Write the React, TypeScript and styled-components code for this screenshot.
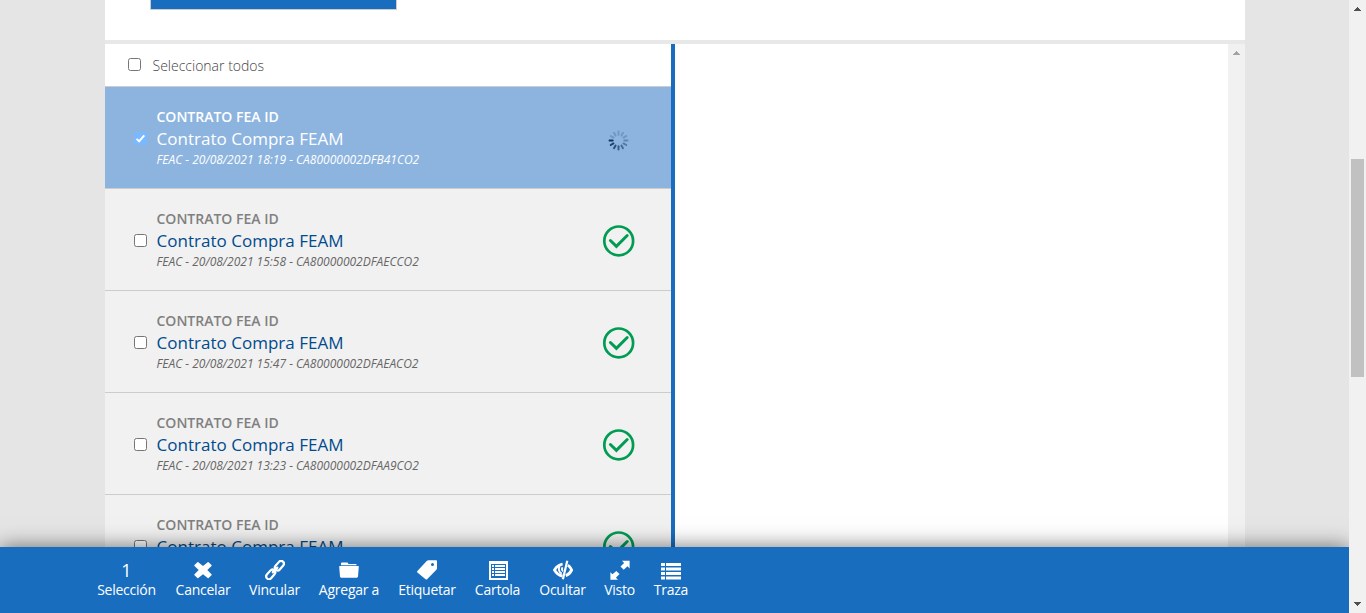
import React from "react";
import styled, { createGlobalStyle } from "styled-components";

const GlobalStyle = createGlobalStyle`
  * { box-sizing: border-box; }
  html, body { margin: 0; padding: 0; overflow: hidden; }
  body { font-family: "Open Sans", "Liberation Sans", sans-serif; }
`;

const Window = styled.div`
  display: grid;
  grid-template-columns: 1fr 17px;
  height: 613px;
  overflow: hidden;
`;

const Page = styled.div`
  display: flex;
  flex-direction: column;
  min-width: 0;
  height: 613px;
  overflow: hidden;
  background: #e5e5e5;
`;

const Content = styled.main`
  display: flex;
  flex-direction: column;
  width: 1140px;
  height: 547px;
  margin-left: 105px;
  overflow: hidden;
`;

const TopPanel = styled.section`
  height: 44px;
  flex: none;
  padding-left: 45px;
  background: #fff;
  border-bottom: 4px solid #e8e8e8;
`;

const SearchButton = styled.div`
  width: 247px;
  height: 10px;
  background: #196dbe;
  border: 1px solid #ccc;
  border-top: 0;
`;

const Split = styled.section`
  display: grid;
  grid-template-columns: 566px 4px 1fr 17px;
  flex: 1;
  min-height: 0;
`;

const List = styled.div`
  display: flex;
  flex-direction: column;
  overflow: hidden;
  background: #f1f1f1;
`;

const Divider = styled.div`
  background: #196dbe;
`;

const Preview = styled.div`
  background: #fff;
`;

const SelectAll = styled.div`
  display: flex;
  flex: none;
  height: 43px;
  padding: 0 0 2px 23px;
  align-items: center;
  gap: 11.5px;
  background: #fff;
  border-bottom: 1px solid #ccc;
  color: #444;
  font-size: 14px;
  font-weight: 300;
  line-height: 20px;
`;

const SelectAllText = styled.span`
  padding-top: 3px;
`;

const Check = styled.span<{ $on?: boolean }>`
  display: flex;
  flex: none;
  width: 13px;
  height: 13px;
  border: 1px solid ${(p) => (p.$on ? "#7ab8ff" : "#767676")};
  border-radius: ${(p) => (p.$on ? "1px" : "2.5px")};
  background: ${(p) => (p.$on ? "#7ab8ff" : "#fff")};
`;

const Row = styled.article<{ $selected?: boolean }>`
  display: flex;
  flex: none;
  height: 102px;
  padding: 19px 36px 0 29px;
  background: ${(p) => (p.$selected ? "#8cb4df" : "#f1f1f1")};
  border-bottom: 1px solid #ccc;
  color: ${(p) => (p.$selected ? "#fff" : "#666")};
`;

const RowCheck = styled.div`
  width: 22.5px;
  padding-top: 26px;
`;

const RowText = styled.div`
  flex: 1;
  white-space: nowrap;
`;

const Kind = styled.div<{ $selected?: boolean }>`
  color: ${(p) => (p.$selected ? "#fff" : "#808080")};
  font-size: 14px;
  font-weight: 600;
  line-height: 22px;
`;

const Title = styled.div<{ $selected?: boolean }>`
  color: ${(p) => (p.$selected ? "#fff" : "#004b8d")};
  font-size: 17px;
  line-height: 22px;
  letter-spacing: 0.02px;
`;

const Meta = styled.div`
  font-size: 12px;
  font-style: italic;
  line-height: 20px;
`;

const Status = styled.div<{ $busy?: boolean }>`
  display: flex;
  width: 33px;
  height: 33px;
  margin-top: ${(p) => (p.$busy ? 18 : 16)}px;
  align-items: center;
  justify-content: center;
`;

const Track = styled.div<{ $disabled?: boolean }>`
  display: flex;
  flex-direction: column;
  align-items: center;
  background: #f1f1f1;
  color: ${(p) => (p.$disabled ? "#a3a3a3" : "#505050")};
`;

const Arrow = styled.span<{ $raised?: boolean }>`
  display: flex;
  flex: none;
  height: 17px;
  padding-bottom: ${(p) => (p.$raised ? 2 : 0)}px;
  align-items: center;
`;

const Thumb = styled.div`
  width: 13px;
  height: 218px;
  margin: 142px 0 auto;
  background: #c1c1c1;
`;

const Toolbar = styled.nav`
  display: flex;
  flex: none;
  z-index: 1;
  height: 66px;
  padding: 11px 0 0 87px;
  background: #196dbe;
  box-shadow: 0 0 20px rgba(0, 0, 0, 0.55);
  color: #fff;
`;

const Tool = styled.div<{ $width: number }>`
  display: flex;
  flex: none;
  flex-direction: column;
  align-items: center;
  width: ${(p) => p.$width}px;
`;

const ToolIcon = styled.span`
  display: flex;
  height: 24px;
  align-items: center;
  justify-content: center;
  font-size: 18px;
  line-height: 24px;
`;

const ToolLabel = styled.span`
  font-size: 14px;
  line-height: 16px;
  letter-spacing: -0.25px;
  white-space: nowrap;
`;

const Caret = ({ down }: { down?: boolean }) => (
  <svg width="7" height="4" viewBox="0 0 7 4" shapeRendering="crispEdges" fill="currentColor">
    <path d={down ? "M0 0h7v1H6v1H5v1H4v1H3V3H2V2H1V1H0z" : "M0 4h7V3H6V2H5V1H4V0H3v1H2v1H1v1H0z"} />
  </svg>
);

const Tick = () => (
  <svg width="11" height="11" viewBox="0 0 11 11" fill="none" stroke="#fff" strokeWidth="2">
    <path d="M1.6 5.9l2.5 2.5 5.2-6.1" />
  </svg>
);

const Done = () => (
  <svg width="33" height="33" viewBox="0 0 33 33" fill="none" stroke="#009c52">
    <circle cx="16.7" cy="16.9" r="14.4" strokeWidth="2.7" />
    <path d="M8.4 16.5l6 5.8L25.2 11.5" strokeWidth="3" strokeLinecap="round" />
  </svg>
);

const spokes = Array.from({ length: 12 }, (_, i) => i);

const Spinner = () => (
  <svg width="23" height="23" viewBox="-11.5 -11.5 23 23" stroke="#0c325f" strokeWidth="1.9" strokeLinecap="round">
    {spokes.map((i) => (
      <line key={i} x1="-5.8" x2="-9" y1="0" y2="0" transform={`rotate(${-i * 30})`} opacity={Math.max(0.22, 1 - i * 0.11)} />
    ))}
  </svg>
);

const iconProps = { width: 20, height: 20, viewBox: "0 0 20 20", fill: "currentColor" };

const Remove = () => (
  <svg {...iconProps}>
    <path d="M4.4 2.2c.3-.3.6-.3.9 0L10 6l4.7-3.800c.3-.3.6-.3.9 0l2.900 2.800c.3.3.3.7 0 1L14.300 10l4.200 4.200c.3.3.3.7 0 1l-2.900 2.800c-.3.3-.6.3-.9 0L10 14.200l-4.700 3.800c-.3.3-.6.3-.9 0l-2.900-2.800c-.3-.3-.3-.7 0-1L5.700 10 1.500 6c-.3-.3-.3-.7 0-1z" />
  </svg>
);

const Link = () => (
  <svg {...iconProps} fill="none" stroke="currentColor" strokeWidth="2.2">
    <rect x="-5.4" y="-2.8" width="10.8" height="5.6" rx="2.8" transform="translate(14.4 5.7) rotate(-49)" />
    <rect x="-5.4" y="-2.8" width="10.8" height="5.6" rx="2.8" transform="translate(5.7 14.4) rotate(-49)" />
    <path d="M8 12.2l4.2-4.4" strokeWidth="2.6" strokeLinecap="round" />
  </svg>
);

const Folder = () => (
  <svg {...iconProps}>
    <path d="M2 5.2V3.7c0-.8.5-1.2 1.2-1.2h4.6c.8 0 1 .3 1.4.9l.4.7h6.8c.8 0 1.3.4 1.3 1.1z" />
    <path d="M.7 6h18.6c.4 0 .6.3.5.7l-.8 9.800c-.1.7-.5 1.200-1.300 1.200H2.300c-.8 0-1.200-.5-1.300-1.200L.2 6.700c0-.4.1-.7.5-.7z" />
  </svg>
);

const Tag = () => (
  <svg {...iconProps}>
    <path fillRule="evenodd" d="M11.6.3h7.6c.5 0 .8.3.8.8v7.2c0 .6-.2 1-.6 1.4l-9.3 9.5c-.5.5-1 .5-1.5 0L.4 12.5c-.5-.5-.5-1 0-1.5L9.7 1.1c.6-.6 1.1-.8 1.900-.8zm3.900 2.600a1.500 1.500 0 1 0 0 3 1.500 1.500 0 0 0 0-3z" />
  </svg>
);

const ListAlt = () => (
  <svg {...iconProps}>
    <path fillRule="evenodd" d="M1 1h19v19H1zM3 4v14h15V4z" />
    <path d="M4 5h2v2H4zM7 5h10v2H7zM4 8h2v2H4zM7 8h10v2H7zM4 11h2v2H4zM7 11h10v2H7zM4 14h2v2H4zM7 14h10v2H7z" />
  </svg>
);

const EyeClosed = () => (
  <svg {...iconProps} fill="none" stroke="currentColor" strokeWidth="2.8">
    <path d="M9.6 4.2C6 4.600 3.400 7 1.500 10c1.800 3.200 4.400 5.600 8 6M14.900 5.200c1.800 1.200 2.900 2.800 3.800 4.800-1.400 2.800-3.400 4.700-5.900 5.700" />
    <path d="M6.800 6C5 8.600 5.800 12.500 8.800 13.600M9.600 7.400C8.400 8.800 8.900 10.600 10.200 11" strokeWidth="1.9" />
    <path d="M14.300.7L9.900 19.300" strokeWidth="2.2" />
  </svg>
);

const Resize = () => (
  <svg {...iconProps}>
    <path d="M12 .8h7.600v7.600l-2.100-2.100-3.800 3.400-3.200-3.200 3.600-3.600zM8 19.800H.4v-7.600l2.100 2.100 3.800-3.400 3.200 3.200-3.600 3.600z" />
  </svg>
);

const ThList = () => (
  <svg {...iconProps}>
    <path d="M0 3h4v3H0zM5 3h15v3H5zM0 7.500h4v3H0zM5 7.500h15v3H5zM0 12h4v3H0zM5 12h15v3H5zM0 16.500h4v3H0zM5 16.500h15v3H5z" />
  </svg>
);

const documents = [
  { meta: "FEAC - 20/08/2021 18:19 - CA80000002DFB41CO2", selected: true },
  { meta: "FEAC - 20/08/2021 15:58 - CA80000002DFAECCO2" },
  { meta: "FEAC - 20/08/2021 15:47 - CA80000002DFAEACO2" },
  { meta: "FEAC - 20/08/2021 13:23 - CA80000002DFAA9CO2" },
  { meta: "" },
];

const tools = [
  { label: "Selección", icon: "1", width: 79 },
  { label: "Cancelar", icon: <Remove />, width: 74 },
  { label: "Vincular", icon: <Link />, width: 69 },
  { label: "Agregar a", icon: <Folder />, width: 80 },
  { label: "Etiquetar", icon: <Tag />, width: 76 },
  { label: "Cartola", icon: <ListAlt />, width: 65 },
  { label: "Ocultar", icon: <EyeClosed />, width: 65 },
  { label: "Visto", icon: <Resize />, width: 49 },
  { label: "Traza", icon: <ThList />, width: 54 },
];

export default function App() {
  return (
    <>
      <GlobalStyle />
      <Window>
        <Page>
          <Content>
            <TopPanel>
              <SearchButton />
            </TopPanel>
            <Split>
              <List>
                <SelectAll>
                  <Check />
                  <SelectAllText>Seleccionar todos</SelectAllText>
                </SelectAll>
                {documents.map((d, i) => (
                  <Row key={i} $selected={d.selected}>
                    <RowCheck>
                      <Check $on={d.selected}>{d.selected && <Tick />}</Check>
                    </RowCheck>
                    <RowText>
                      <Kind $selected={d.selected}>CONTRATO FEA ID</Kind>
                      <Title $selected={d.selected}>Contrato Compra FEAM</Title>
                      {d.meta && <Meta>{d.meta}</Meta>}
                    </RowText>
                    <Status $busy={d.selected}>{d.selected ? <Spinner /> : <Done />}</Status>
                  </Row>
                ))}
              </List>
              <Divider />
              <Preview />
              <Track $disabled>
                <Arrow>
                  <Caret />
                </Arrow>
              </Track>
            </Split>
          </Content>
          <Toolbar>
            {tools.map((t) => (
              <Tool key={t.label} $width={t.width}>
                <ToolIcon>{t.icon}</ToolIcon>
                <ToolLabel>{t.label}</ToolLabel>
              </Tool>
            ))}
          </Toolbar>
        </Page>
        <Track>
          <Arrow>
            <Caret />
          </Arrow>
          <Thumb />
          <Arrow $raised>
            <Caret down />
          </Arrow>
        </Track>
      </Window>
    </>
  );
}
